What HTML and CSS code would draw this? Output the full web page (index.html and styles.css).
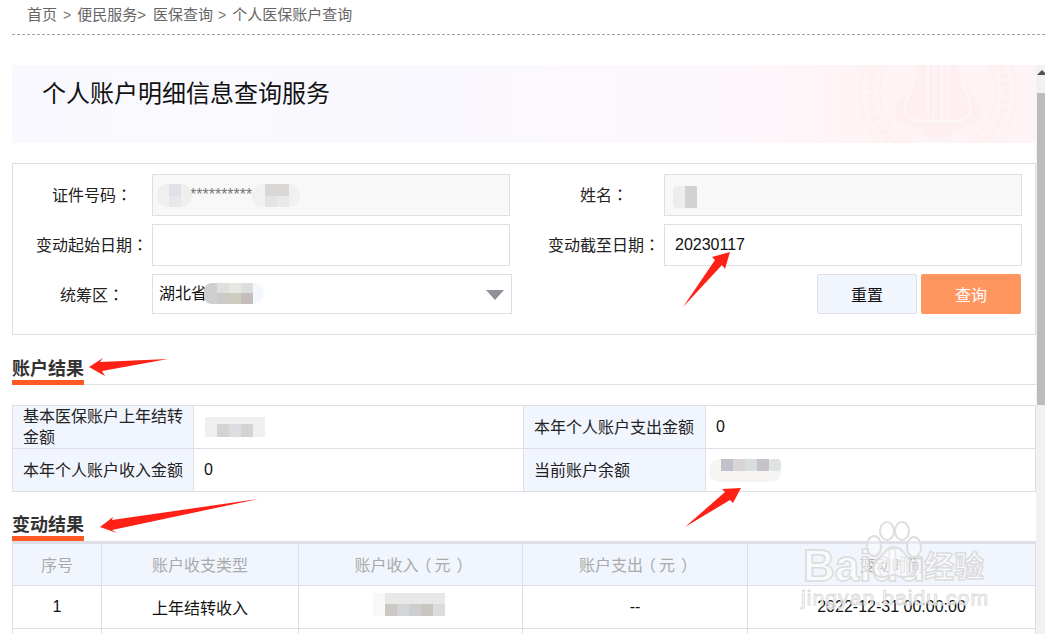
FILE: index.html
```html
<!DOCTYPE html>
<html lang="zh-CN">
<head>
<meta charset="utf-8">
<title>个人账户明细信息查询服务</title>
<link rel="stylesheet" href="styles.css">
</head>
<body>
<div class="page">
  <nav class="crumbs"><span>首页</span><i>&gt;</i><span>便民服务&gt;</span><span class="gap">医保查询</span><i>&gt;</i><span>个人医保账户查询</span></nav>
  <div class="frame">
    <main class="content">
      <header class="banner">
        <h1>个人账户明细信息查询服务</h1>
        <svg class="emblem" viewBox="0 0 160 78" aria-hidden="true">
          <circle cx="80" cy="27" r="78" fill="none" stroke="#fef0f2" stroke-width="2"/>
          <circle cx="80" cy="27" r="58" fill="none" stroke="#fef0f2" stroke-width="2"/>
          <circle cx="80" cy="27" r="68" fill="none" stroke="#feeff1" stroke-width="7" stroke-dasharray="4 4"/>
          <path fill="#fef0f2" d="M56-2C62 2 60 10 54 20 46 32 37 38 37 48 37 60 56 62 64 66L67 72H93L96 66C104 62 123 60 123 48 123 38 114 32 106 20 100 10 98 2 104-2Z"/>
          <path fill="none" stroke="#fff6f7" stroke-width="2" d="M56 3C58 10 56 20 50 32 44 44 48 55 62 56H98C112 55 116 44 110 32 104 20 102 10 104 3M70 0V52M76 0V54M84 0V54M90 0V52"/>
        </svg>
      </header>

      <form class="query">
        <div class="field"><label>证件号码<span class="tc" lang="zh-TW">：</span></label><div class="box readonly"><span class="stars">**********</span></div></div>
        <div class="field"><label>姓名<span class="tc" lang="zh-TW">：</span></label><div class="box readonly"></div></div>
        <div class="field"><label>变动起始日期<span class="tc" lang="zh-TW">：</span></label><div class="box"></div></div>
        <div class="field"><label>变动截至日期<span class="tc" lang="zh-TW">：</span></label><div class="box"><span>20230117</span></div></div>
        <div class="field"><label>统筹区<span class="tc" lang="zh-TW">：</span></label><div class="box select"><span>湖北省</span><b class="caret"></b></div></div>
        <div class="actions"><button type="button" class="btn reset">重置</button><button type="button" class="btn search">查询</button></div>
      </form>

      <section class="heading first"><h2>账户结果</h2></section>
      <table class="account">
        <colgroup><col class="a1"><col class="a2"><col class="a3"><col></colgroup>
        <tr class="r43"><th>基本医保账户上年结转金额</th><td></td><th>本年个人账户支出金额</th><td>0</td></tr>
        <tr class="r43"><th>本年个人账户收入金额</th><td>0</td><th>当前账户余额</th><td></td></tr>
      </table>

      <section class="heading second"><h2>变动结果</h2></section>
      <table class="changes">
        <colgroup><col class="c1"><col class="c2"><col class="c3"><col class="c4"><col></colgroup>
        <thead><tr class="r43"><th>序号</th><th>账户收支类型</th><th>账户收入<span class="lp">（</span>元<span class="rp">）</span></th><th>账户支出<span class="lp">（</span>元<span class="rp">）</span></th><th>变动时间</th></tr></thead>
        <tbody><tr class="r43"><td>1</td><td>上年结转收入</td><td></td><td>--</td><td>2022-12-31 00:00:00</td></tr>
        <tr class="r43"><td></td><td></td><td></td><td></td><td></td></tr></tbody>
      </table>
    </main>
    <aside class="scrollbar"><span class="up"></span><span class="thumb"></span></aside>
  </div>

  <!-- mosaics over the private values, and the hand-drawn arrows -->
  <svg class="overlay" viewBox="0 0 1045 634" aria-hidden="true">
    <g>
      <rect x="157" y="184" width="35" height="23" rx="10" fill="#f0eeee"/>
      <rect x="169" y="184" width="12" height="12" fill="#dfe1e6"/><rect x="169" y="196" width="12" height="11" fill="#e7e8eb"/>
      <rect x="252" y="184" width="48" height="23" rx="10" fill="#f1f1f1"/>
      <rect x="265" y="184" width="24" height="12" fill="#d9d8d7"/><rect x="265" y="196" width="12" height="11" fill="#e4e4e4"/><rect x="277" y="196" width="12" height="11" fill="#e9e9e9"/>
      <rect x="673" y="186" width="24" height="22" rx="4" fill="#ededed"/><rect x="685" y="186" width="12" height="22" fill="#d2d2d2"/>
      <rect x="204" y="283" width="60" height="21" rx="10" fill="#f4f8fc"/>
      <rect x="204" y="283" width="48" height="21" rx="8" fill="#cfcfcf"/>
      <rect x="217" y="283" width="12" height="10" fill="#e0dfdb"/><rect x="229" y="283" width="12" height="10" fill="#e7e7e3"/><rect x="241" y="283" width="12" height="10" fill="#dfdede"/>
      <rect x="217" y="293" width="12" height="11" fill="#cccbc8"/><rect x="229" y="293" width="12" height="11" fill="#ccccbf"/><rect x="241" y="293" width="12" height="11" fill="#c5bdbb"/>
      <rect x="205" y="417" width="60" height="20" fill="#efefef"/>
      <rect x="217" y="424" width="12" height="13" fill="#d3d3d1"/><rect x="229" y="424" width="12" height="13" fill="#dcdde0"/><rect x="241" y="424" width="12" height="13" fill="#d3d3d3"/>
      <rect x="709" y="459" width="72" height="23" rx="10" fill="#f6f5f4"/>
      <rect x="721" y="459" width="12" height="12" fill="#bfc1cb"/><rect x="733" y="459" width="12" height="12" fill="#d9d5d5"/><rect x="745" y="459" width="12" height="12" fill="#dadddd"/><rect x="757" y="459" width="12" height="12" fill="#c6c2c8"/><rect x="769" y="459" width="12" height="12" rx="4" fill="#dfe2e2"/>
      <rect x="373" y="593" width="72" height="23" fill="#f8f8f8"/>
      <rect x="385" y="593" width="60" height="11" fill="#e9e8e8"/>
      <rect x="385" y="604" width="12" height="12" fill="#ccc8c4"/><rect x="397" y="604" width="12" height="12" fill="#d2d6d8"/><rect x="409" y="604" width="12" height="12" fill="#cdcdcd"/><rect x="421" y="604" width="12" height="12" fill="#c9c6c2"/><rect x="433" y="604" width="12" height="12" fill="#dcdcdc"/>
    </g>
    <g fill="#ff2016">
      <polygon points="683,307 715,260 712,257 730,252 725,269 722,265"/>
      <polygon points="685,527 725,492 722,489 741,488 733,503 730,500"/>
      <polygon points="89,367 103,358 100,362 168,359 102,371 105,376"/>
      <polygon points="100,527 113,517 112,520 258,499 112,530 117,533"/>
    </g>
  </svg>

  <div class="watermark" aria-hidden="true">
    <div class="brand"><span>Baidu</span><span class="cn">经验</span></div>
    <svg class="paw" viewBox="0 0 58 60">
      <g fill="rgba(255,255,255,.35)" stroke="#dedede" stroke-width="2">
        <ellipse cx="10" cy="25" rx="7" ry="10"/><ellipse cx="23" cy="10" rx="7" ry="9"/><ellipse cx="38" cy="10" rx="7" ry="9"/><ellipse cx="50" cy="26" rx="7" ry="10"/>
        <path d="M30 26C22 26 18 36 12 41 7 47 10 57 19 56 24 56 26 54 30 54S36 57 41 56C50 56 52 47 48 41 42 36 38 26 30 26Z"/>
      </g>
    </svg>
    <div class="site">jingyan.baidu.com</div>
  </div>
</div>
</body>
</html>
```
FILE: styles.css
```css
* { box-sizing: border-box; }
html, body { margin: 0; height: 100%; background: #fff; overflow: hidden; }
body { font-family: "Liberation Sans", "Noto Sans CJK SC", sans-serif; color: #111; text-spacing-trim: space-all; }

.page { position: relative; width: 1045px; height: 634px; overflow: hidden; }

.crumbs {
  height: 35px; margin-left: 12px; padding: 5px 0 0 15px;
  border-bottom: 1px dashed #a5a5a5;
  display: flex; gap: 6px; font-size: 15px; line-height: 20px; color: #666;
}
.crumbs i { font-style: normal; font-size: 14px; color: #777; }
.crumbs .gap { margin-left: 1px; margin-right: -1px; }

.tc { font-family: "Noto Sans CJK TC", sans-serif; }
.lp { display: inline-block; transform: translateX(-3px); }
.rp { display: inline-block; transform: translateX(6px); }

.frame { display: flex; margin-top: 30px; height: 569px; }
.content { width: 1024px; margin-left: 12px; flex: none; }
.scrollbar { width: 9px; flex: none; background: #f1f1f1; padding-left: 1px; overflow: hidden; }
.up {
  display: block; width: 0; height: 0; margin-top: 5px;
  border-left: 5px solid transparent; border-right: 5px solid transparent; border-bottom: 5px solid #505050;
}
.thumb { display: block; width: 8px; height: 312px; margin-top: 18px; background: #bcbcbc; }

.banner {
  position: relative; height: 78px; overflow: hidden; padding: 11px 0 0 30px;
  background: linear-gradient(90deg, #f8f9fe 0%, #faf8fe 45%, #fdf7fd 70%, #fff4f5 82%, #fff4f5 100%);
}
.banner h1 { margin: 0; font-size: 24px; font-weight: 400; line-height: 36px; color: #111; }
.emblem { position: absolute; right: 18px; top: 0; width: 160px; height: 78px; }

.query {
  margin-top: 20px; height: 172px; border: 1px solid #dedfe6;
  display: grid; grid-template-columns: 512px 1fr; grid-auto-rows: 50px;
  padding: 10px 13px 0 0; align-content: start;
}
.field { display: flex; align-items: flex-start; padding-left: 19px; }
.field label {
  width: 120px; flex: none; height: 42px; line-height: 41px; font-size: 16px; color: #222; text-align: center;
}
.box {
  width: 358px; height: 42px; flex: none; border: 1px solid #dedfe6; background: #fff;
  font-size: 16px; line-height: 40px; padding-left: 10px; color: #111;
}
.readonly { background: #f8f8f8; }
.stars { font-size: 16px; color: #777; margin-left: 27px; }
.select { width: 360px; height: 40px; line-height: 38px; padding-left: 6px; display: flex; justify-content: space-between; align-items: center; }
.caret {
  width: 0; height: 0; margin-right: 7px; margin-top: 1px;
  border-left: 9px solid transparent; border-right: 9px solid transparent; border-top: 10px solid #909098;
}
.actions { display: flex; gap: 4px; justify-content: flex-end; margin-right: 1px; }
.btn { width: 100px; height: 40px; border-radius: 2px; font-family: inherit; font-size: 16px; padding: 0; }
.reset { background: #f1f5fd; border: 1px solid #dedfe6; color: #111; }
.search { background: #ff9660; border: 0; color: #fff; }

.heading { border-bottom: 1px solid #dedfe6; height: 30px; }
.heading.first { margin-top: 20px; }
.heading.second { margin-top: 19px; border-bottom: 0; height: 30px; }
.heading h2 {
  display: inline-block; margin: 0; height: 30px; line-height: 28px; font-size: 18px; font-weight: 700; color: #333;
  border-bottom: 5px solid #ff5a26;
}

table { border-collapse: collapse; table-layout: fixed; width: 1024px; font-size: 16px; }
th, td { border: 1px solid #dedfe6; font-weight: 400; padding: 0; }
.r43 { height: 43px; }
.account { margin-top: 20px; }
.account th { background: #f1f5fd; text-align: left; padding: 0 10px; line-height: 21px; color: #222; }
.account td { padding-left: 10px; }
.a1 { width: 181px; } .a2 { width: 330px; } .a3 { width: 182px; }

.changes { border-top: 3px solid #dedfe6; }
.changes th { background: #f1f5fd; color: #aaa; padding-bottom: 2px; }
.changes td { text-align: center; color: #111; }
.c1 { width: 89px; } .c2 { width: 197px; } .c3 { width: 224px; } .c4 { width: 225px; }

.overlay { position: absolute; left: 0; top: 0; width: 1045px; height: 634px; pointer-events: none; }

.watermark { position: absolute; left: 800px; top: 520px; width: 190px; height: 100px; pointer-events: none; }
.paw { position: absolute; left: 64px; top: 1px; width: 58px; height: 60px; }
.brand {
  position: absolute; left: 3px; top: 20px; font-size: 44px; font-weight: 700; line-height: 48px; white-space: nowrap;
  color: rgba(255,255,255,.55); -webkit-text-stroke: 1.5px #dcdcdc;
}
.brand .cn { font-size: 30px; margin-left: -1px; vertical-align: 4px; font-family: "Noto Sans CJK SC", sans-serif; }
.site {
  position: absolute; left: 1px; top: 65px; font-size: 21px; line-height: 26px; letter-spacing: 1.1px; white-space: nowrap;
  color: rgba(255,255,255,.5); -webkit-text-stroke: 1px #dcdcdc;
}
```
